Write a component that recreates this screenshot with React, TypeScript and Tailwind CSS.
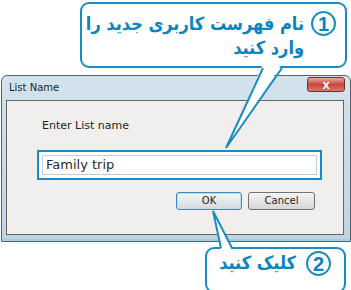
const BLUE = "#1a8cc2";

function Badge({ n }: { n: string }) {
  return (
    <span className="flex h-[25px] w-[25px] shrink-0 items-center justify-center rounded-full border-2 border-[#1a8cc2] bg-white font-['Liberation_Sans',sans-serif] text-[20px] font-bold leading-none text-[#0b84bd]">
      {n}
    </span>
  );
}

function Tails() {
  return (
    <svg className="pointer-events-none absolute left-0 top-0" width="351" height="290" viewBox="0 0 351 290">
      <polygon points="263,64 226,148 282,64" fill="#fff" />
      <polyline points="263,68 226,148 282,68" fill="none" stroke={BLUE} strokeWidth="2" strokeLinejoin="miter" />
      <polygon points="221,250 213,211 232,250" fill="#fff" />
      <polyline points="221,248 213,211 232,248" fill="none" stroke={BLUE} strokeWidth="2" strokeLinejoin="miter" />
    </svg>
  );
}

export default function App() {
  return (
    <div className="relative h-[290px] w-[351px] overflow-hidden bg-white">
      {/* callout 1 */}
      <div className="flex h-[75px] justify-end pr-[4px] pt-[2px]">
        <div
          dir="rtl"
          className="flex h-[66px] w-[267px] items-start gap-[7px] rounded-[9px] border-2 border-[#1a8cc2] bg-white pr-[9px] pt-[7px]"
        >
          <Badge n="1" />
          <p className="whitespace-nowrap pt-[1px] font-['DejaVu_Sans_Condensed','DejaVu_Sans',sans-serif] text-[18px] font-bold leading-[24px] text-[#0b84bd]">
            نام فهرست کاربری جدید را
            <br />
            وارد کنید
          </p>
        </div>
      </div>

      {/* dialog */}
      <div className="ml-[1px] flex h-[167px] w-[350px] flex-col rounded-t-[6px] border border-[#56636d] bg-gradient-to-b from-[#d3e3ed] to-[#bfd5e2] pb-[6px] pl-[4px] pr-[6px] shadow-[inset_0_-2px_0_#9fd0df]">
        <div className="flex h-[24px] items-start justify-between">
          <span className="pl-[3px] pt-[7px] font-['DejaVu_Sans',sans-serif] text-[10px] leading-none text-[#1e1e1e]">
            List Name
          </span>
          <div className="mr-[-1px] mt-[1px] flex h-[15px] w-[38px] items-center justify-center rounded-[3px] border border-[#7a2a2a] bg-gradient-to-b from-[#e9a9a0] via-[#c8473c] to-[#d9786d]">
            <span className="font-['DejaVu_Sans',sans-serif] text-[12px] font-bold leading-none text-white [text-shadow:0_0_1px_#4a1010]">
              x
            </span>
          </div>
        </div>
        <div className="flex flex-1 flex-col border border-[#646464] bg-[#f0efed] pl-[30px] pr-[21px]">
          <span className="pl-[5px] pt-[19px] font-['DejaVu_Sans',sans-serif] text-[11px] leading-none text-[#1e1e1e]">
            Enter List name
          </span>
          <div className="mt-[19px] h-[30px] border-2 border-[#1a8cc2] bg-white p-[3px]">
            <div className="flex h-full items-center border border-[#c2ccd4] pl-[3px] font-['DejaVu_Sans',sans-serif] text-[13px] text-[#2a2a2a]">
              Family trip
            </div>
          </div>
          <div className="mt-[12px] flex justify-end gap-[6px] pr-[7px]">
            <button className="h-[18px] w-[66px] rounded-[3px] border border-[#3d8ab8] bg-gradient-to-b from-[#f4f7f9] to-[#d3dade] font-['DejaVu_Sans',sans-serif] text-[10px] leading-none text-[#1e1e1e] shadow-[inset_0_0_0_1px_#b7e0f3]">
              OK
            </button>
            <button className="h-[18px] w-[67px] rounded-[3px] border border-[#707070] bg-gradient-to-b from-[#f4f4f4] to-[#d6d6d6] font-['DejaVu_Sans',sans-serif] text-[10px] leading-none text-[#1e1e1e]">
              Cancel
            </button>
          </div>
        </div>
      </div>

      {/* callout 2 */}
      <div className="flex justify-end pr-[5px] pt-[5px]">
        <div
          dir="rtl"
          className="flex h-[46px] w-[141px] items-start gap-[10px] rounded-[9px] border-2 border-[#1a8cc2] bg-white pr-[13px] pt-[2px]"
        >
          <Badge n="2" />
          <p className="whitespace-nowrap font-['DejaVu_Sans_Condensed','DejaVu_Sans',sans-serif] text-[18px] font-bold leading-[24px] text-[#0b84bd]">
            کلیک کنید
          </p>
        </div>
      </div>

      <Tails />
    </div>
  );
}
